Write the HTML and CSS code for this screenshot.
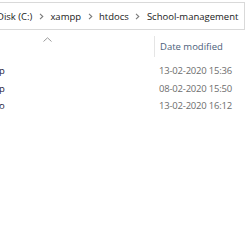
FILE: index.html
```html
<!DOCTYPE html>
<html>
<head>
<meta charset="utf-8">
<link rel="stylesheet" href="styles.css">
</head>
<body>
<div class="topline"></div>
<div class="address">
  <span class="crumb first">Disk (C:)</span>
  <span class="chev"><svg width="5" height="7" viewBox="0 0 5 7"><path d="M1 0.8 L3.8 3.5 L1 6.2" fill="none" stroke="#7a7a7a" stroke-width="1.1"/></svg></span>
  <span class="crumb">xampp</span>
  <span class="chev"><svg width="5" height="7" viewBox="0 0 5 7"><path d="M1 0.8 L3.8 3.5 L1 6.2" fill="none" stroke="#7a7a7a" stroke-width="1.1"/></svg></span>
  <span class="crumb">htdocs</span>
  <span class="chev"><svg width="5" height="7" viewBox="0 0 5 7"><path d="M1 0.8 L3.8 3.5 L1 6.2" fill="none" stroke="#7a7a7a" stroke-width="1.1"/></svg></span>
  <span class="crumb">School-management</span>
</div>
<div class="header">
  <div class="col-name">
    <svg class="caret" width="9" height="5" viewBox="0 0 9 5"><path d="M0.5 4.5 L4.5 0.8 L8.5 4.5" fill="none" stroke="#9a9a9a" stroke-width="1"/></svg>
  </div>
  <div class="col-date">Date modified</div>
</div>
<div class="rows">
  <div class="row"><span class="name">p</span><span class="date">13-02-2020 15:36</span></div>
  <div class="row"><span class="name">p</span><span class="date">08-02-2020 15:50</span></div>
  <div class="row"><span class="name">o</span><span class="date">13-02-2020 16:12</span></div>
</div>
</body>
</html>
```
FILE: styles.css
```css
html, body {
  margin: 0;
  padding: 0;
  background: #ffffff;
  width: 250px;
  height: 250px;
  overflow: hidden;
  font-family: "Open Sans", "Noto Sans", sans-serif;
  font-size: 9.5px;
}
.topline {
  height: 2px;
}
.address {
  box-sizing: border-box;
  width: 245px;
  height: 28px;
  border: 1px solid #d9d9d9;
  border-left: none;
  display: flex;
  align-items: center;
  color: #1a1a1a;
  white-space: nowrap;
  overflow: hidden;
}
.crumb.first {
  margin-left: -3px;
}
.chev {
  width: 18px;
  height: 7px;
  flex: none;
  display: flex;
  justify-content: center;
  align-items: center;
}
.chev svg {
  display: block;
}
.header {
  display: flex;
  height: 21px;
  margin-top: 6px;
}
.col-name {
  width: 154px;
  flex: none;
  border-right: 1px solid #e5e5e5;
  position: relative;
}
.caret {
  position: absolute;
  left: 43px;
  top: 1px;
}
.col-date {
  padding-left: 5px;
  color: #4c607a;
  line-height: 21px;
  white-space: nowrap;
}
.rows {
  margin-top: 5px;
}
.row {
  display: flex;
  height: 17.5px;
  line-height: 17.5px;
  white-space: nowrap;
}
.name {
  width: 160px;
  flex: none;
  color: #1e1a3c;
  margin-left: -1px;
}
.date {
  color: #6d6d6d;
  letter-spacing: -0.2px;
}
```
